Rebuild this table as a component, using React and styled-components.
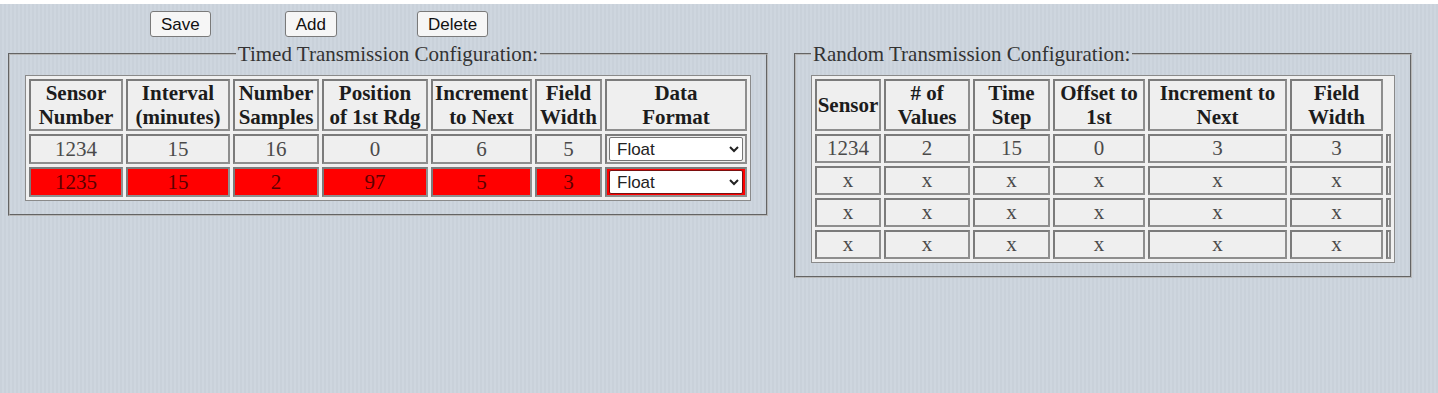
import React from 'react'
import styled, { createGlobalStyle } from 'styled-components'

const GlobalStyle = createGlobalStyle`
  html, body {
    margin: 0;
    padding: 0;
    background: #ffffff;
  }
  body {
    font-family: "Liberation Serif", "Times New Roman", serif;
  }
`

const serif = `"Liberation Serif", "Times New Roman", serif`

const Page = styled.div`
  margin-top: 4px;
  min-height: calc(100vh - 4px);
  box-sizing: border-box;
  padding: 7px 8px 0 8px;
  background: repeating-linear-gradient(
    90deg,
    #c9d1da 0px,
    #c9d1da 2px,
    #ced6df 2px,
    #ced6df 4px
  );
`

const ButtonRow = styled.div`
  display: flex;
  align-items: center;
  padding-left: 142px;
  height: 26px;
`

const Button = styled.button`
  font-family: "Liberation Sans", Arial, sans-serif;
  font-size: 17px;
  color: #111;
  height: 26px;
  padding: 0 10px;
  margin-left: ${p => p.$ml || 0}px;
  background: #f6f6f6;
  border: 1px solid #7a7a7a;
  border-radius: 3px;
  line-height: 1;
`

const Panels = styled.div`
  display: flex;
  align-items: flex-start;
  gap: 26px;
  margin-top: 5px;
`

const Fieldset = styled.fieldset`
  margin: 0;
  font-family: ${serif};
  font-size: 21px;
  padding: 9px 15px 13px;
  border: 2px groove #b8b8b8;
`

const Legend = styled.legend`
  margin: ${p => (p.$center ? '0 auto' : '0')};
  padding: 0 2px;
  font-family: ${serif};
  font-size: 21px;
  line-height: 24px;
  color: #333;
`

const Table = styled.table`
  border: 1px solid #8a8a8a;
  border-spacing: 3px;
  background: #f0f0f0;
  table-layout: fixed;
`

const Th = styled.th`
  box-sizing: border-box;
  width: ${p => p.$w}px;
  border: 2px solid #7b7b7b;
  border-right-color: #8e8e8e;
  border-bottom-color: #8e8e8e;
  padding: 0;
  background: #efefef;
  color: #1c1c1c;
  font-family: ${serif};
  font-size: 21px;
  line-height: 24px;
  font-weight: bold;
  text-align: center;
`

const Td = styled.td`
  box-sizing: border-box;
  border: 2px solid #7b7b7b;
  border-right-color: #8e8e8e;
  border-bottom-color: #8e8e8e;
  padding: ${p => (p.$tight ? '1px 2px' : '1px 0')};
  background: ${p => (p.$alert ? '#ff0000' : '#efefef')};
  color: ${p => (p.$alert ? '#5c0000' : '#4a4a4a')};
  font-family: ${serif};
  font-size: 21px;
  line-height: 23px;
  text-align: center;
`

const Spacer = styled(Td)`
  width: 5px;
  padding: 0;
`

const Select = styled.select`
  display: block;
  width: 100%;
  height: 24px;
  font-family: "Liberation Sans", Arial, sans-serif;
  font-size: 17px;
  color: #222;
  background: #fff;
  border: 1px solid ${p => (p.$alert ? '#7a1010' : '#767676')};
  border-radius: 2px;
  padding: 0 3px;
`

const timedCols = [
  ['Sensor', 'Number', 94],
  ['Interval', '(minutes)', 104],
  ['Number', 'Samples', 86],
  ['Position', 'of 1st Rdg', 106],
  ['Increment', 'to Next', 101],
  ['Field', 'Width', 67],
  ['Data', 'Format', 142],
]

const timedRows = [
  { vals: ['1234', '15', '16', '0', '6', '5'], alert: false },
  { vals: ['1235', '15', '2', '97', '5', '3'], alert: true },
]

const randomCols = [
  [null, 'Sensor', 66],
  ['# of', 'Values', 86],
  ['Time', 'Step', 77],
  ['Offset to', '1st', 92],
  ['Increment to', 'Next', 139],
  ['Field', 'Width', 93],
]

const randomRows = [
  ['1234', '2', '15', '0', '3', '3'],
  ['x', 'x', 'x', 'x', 'x', 'x'],
  ['x', 'x', 'x', 'x', 'x', 'x'],
  ['x', 'x', 'x', 'x', 'x', 'x'],
]

const Head = ({ top, bottom, w }) => (
  <Th $w={w}>
    {top && <>{top}<br /></>}
    {bottom}
  </Th>
)

const TimedConfig = () => (
  <Fieldset>
    <Legend $center>Timed Transmission Configuration:</Legend>
    <Table>
      <tbody>
        <tr>
          {timedCols.map(([t, b, w]) => <Head key={t + b} top={t} bottom={b} w={w} />)}
        </tr>
        {timedRows.map((row, i) => (
          <tr key={i}>
            {row.vals.map((v, j) => (
              <Td key={j} $alert={row.alert}>{v}</Td>
            ))}
            <Td $alert={row.alert} $tight>
              <Select $alert={row.alert} defaultValue="Float">
                <option>Float</option>
                <option>Integer</option>
              </Select>
            </Td>
          </tr>
        ))}
      </tbody>
    </Table>
  </Fieldset>
)

const RandomConfig = () => (
  <Fieldset>
    <Legend>Random Transmission Configuration:</Legend>
    <Table>
      <tbody>
        <tr>
          {randomCols.map(([t, b, w]) => <Head key={b} top={t} bottom={b} w={w} />)}
        </tr>
        {randomRows.map((row, i) => (
          <tr key={i}>
            {row.map((v, j) => <Td key={j}>{v}</Td>)}
            <Spacer />
          </tr>
        ))}
      </tbody>
    </Table>
  </Fieldset>
)

export default function App() {
  return (
    <>
      <GlobalStyle />
      <Page>
        <ButtonRow>
          <Button>Save</Button>
          <Button $ml={74}>Add</Button>
          <Button $ml={80}>Delete</Button>
        </ButtonRow>
        <Panels>
          <TimedConfig />
          <RandomConfig />
        </Panels>
      </Page>
    </>
  )
}
